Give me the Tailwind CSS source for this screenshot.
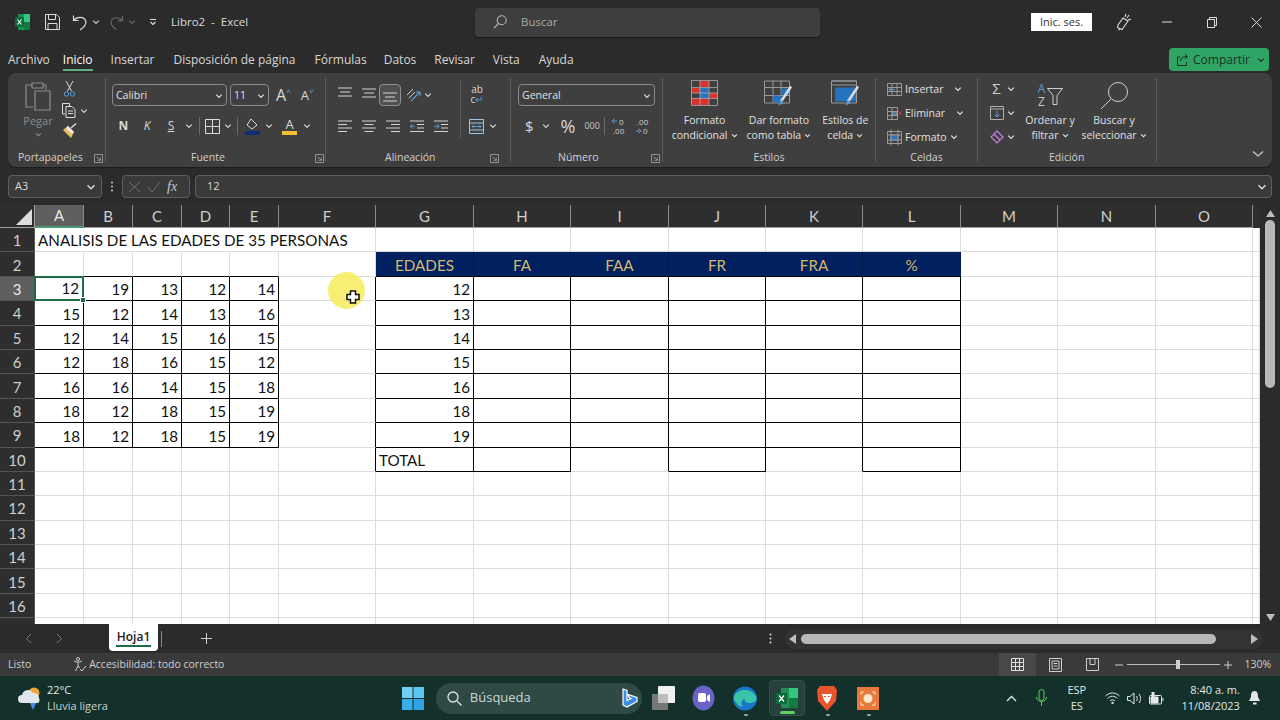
<!DOCTYPE html>
<html lang="es"><head><meta charset="utf-8"><title>Libro2 - Excel</title>
<script src="https://cdn.jsdelivr.net/npm/@tailwindcss/browser@4"></script></head>
<body class="m-0 overflow-hidden">
<svg class="hidden"><defs>
<symbol id="ch" viewBox="0 0 8 8"><path d="M1.2 2.600 4 5.400l2.800-2.800" fill="none" stroke="currentColor" stroke-width="1.200"/></symbol>
<symbol id="ln" viewBox="0 0 10 10"><path d="M.5.500h9v9h-9zM3 3l4 4M7 4v3H4" fill="none" stroke="currentColor" stroke-width=".9"/></symbol>
</defs></svg>
<div class="relative w-[1280px] h-[720px] overflow-hidden bg-[#2b2b2b] text-[#d6d6d6] flex flex-col font-['Open_Sans',sans-serif] text-[12px]">

<!-- Title bar -->
<header class="h-[44px] flex items-center shrink-0">
  <svg class="ml-[15px] w-[15px] h-[16px]" viewBox="0 0 15 16"><rect x="3" width="12" height="16" rx="1" fill="#1f8f55"/><rect x="9" y="0" width="6" height="8" fill="#33c481"/><rect x="9" y="8" width="6" height="8" fill="#107c41"/><rect y="3" width="9" height="10" rx="1" fill="#0e6b39"/><path d="M2.500 5.500 6.500 10.500M6.500 5.500 2.500 10.500" stroke="#fff" stroke-width="1.100"/></svg>
  <svg class="ml-[15px] w-[15px] h-[16px]" viewBox="0 0 15 16" fill="none" stroke="#dcdcdc" stroke-width="1"><path d="M.5.500h11l3 3v12H.500zM3.500.500v5h7v-5M3 15.500v-6h9v6"/></svg>
  <svg class="ml-[12px] w-[16px] h-[17px]" viewBox="0 0 16 17" fill="none" stroke="#dcdcdc" stroke-width="1.200"><path d="M1.500 1.500v5h5M1.700 6.300C5 2.500 12 2.200 13.700 7c1 3.300-1.700 6.300-5.700 9"/></svg>
  <svg class="ml-[4px] w-[8px] h-[8px] text-[#ccc]"><use href="#ch"/></svg>
  <svg class="ml-[9px] w-[15px] h-[17px]" viewBox="0 0 16 17" fill="none" stroke="#6a6a6a" stroke-width="1.200"><path d="M14.500 1.500v5h-5M14.300 6.300C11 2.500 4 2.200 2.300 7c-1 3.300 1.700 6.300 5.700 9"/></svg>
  <svg class="ml-[4px] w-[8px] h-[8px] text-[#6a6a6a]"><use href="#ch"/></svg>
  <svg class="ml-[13px] w-[8px] h-[8px]" viewBox="0 0 8 8" fill="none" stroke="#ddd"><path d="M1 1.500h6M1.500 4l2.500 2.500L6.500 4" stroke-width="1.200"/></svg>
  <span class="ml-[14px] text-[11.500px] text-[#dcdcdc] whitespace-pre">Libro2  -  Excel</span>
  <div class="ml-[227px] w-[345px] h-[29px] rounded bg-[#3e3e3e] flex items-center shadow-[0_1px_1px_#1a1a1a]">
    <svg class="ml-[18px] w-[14px] h-[14px]" viewBox="0 0 14 14" fill="none" stroke="#b5b5b5" stroke-width="1.100"><circle cx="8.700" cy="5.300" r="4.500"/><path d="M5.500 8.500 .7 13.300"/></svg>
    <span class="ml-[14px] text-[#a8a8a8] text-[11.500px]">Buscar</span>
  </div>
  <div class="ml-[211px] w-[61px] h-[18px] bg-white text-[#333] text-[11px] flex items-center justify-center">Inic. ses.</div>
  <svg class="ml-[24px] w-[16px] h-[18px]" viewBox="0 0 16 18" fill="none" stroke="#dcdcdc" stroke-width="1.100"><path d="M7 5 12 8 6 16.500 1.500 14.500 2 12zM4 16l-1.500 1M10 1l-1 3M13 2l-2 3M15 6l-3 1"/></svg>
  <svg class="ml-[30px] w-[10px] h-[10px]" viewBox="0 0 10 10"><path d="M0 5h10" stroke="#dcdcdc"/></svg>
  <svg class="ml-[35px] w-[10px] h-[11px]" viewBox="0 0 10 11" fill="none" stroke="#dcdcdc"><path d="M.5 2.500h7v8h-7zM2.500 2.500v-2h7v8h-2"/></svg>
  <svg class="ml-[34px] w-[11px] h-[11px]" viewBox="0 0 11 11" fill="none" stroke="#dcdcdc"><path d="M.5.500l10 10M10.500.500l-10 10"/></svg>
</header>

<!-- Tabs -->
<nav class="h-[29px] shrink-0 flex items-start text-[12px] text-[#d8d8d8] relative">
  <span class="ml-[8px] mt-[7px] leading-[17px]">Archivo</span>
  <span class="ml-[13px] mt-[7px] leading-[17px] pb-[1px] border-b-2 border-[#5fae84] text-white">Inicio</span>
  <span class="ml-[18px] mt-[7px] leading-[17px]">Insertar</span>
  <span class="ml-[19px] mt-[7px] leading-[17px]">Disposición de página</span>
  <span class="ml-[19px] mt-[7px] leading-[17px]">Fórmulas</span>
  <span class="ml-[17px] mt-[7px] leading-[17px]">Datos</span>
  <span class="ml-[18px] mt-[7px] leading-[17px]">Revisar</span>
  <span class="ml-[18px] mt-[7px] leading-[17px]">Vista</span>
  <span class="ml-[19px] mt-[7px] leading-[17px]">Ayuda</span>
  <div class="absolute left-[1169px] top-[4px] w-[100px] h-[23px] rounded bg-[#2fa465] flex items-center pl-[8px] text-[#1b3326]">
    <svg class="w-[12px] h-[13px]" viewBox="0 0 12 13" fill="none" stroke="#12301f"><path d="M3 4H.5v8.500h9V9M3.500 8C4 4.500 7 3.500 10 3.500M8 1l2.500 2.500L8 6"/></svg>
    <span class="ml-[4px] text-[12px]">Compartir</span>
    <svg class="ml-[7px] w-[8px] h-[8px]"><use href="#ch"/></svg>
  </div>
</nav>

<!-- Ribbon -->
<section class="mx-2 h-[94px] shrink-0 rounded-lg bg-[#3f3f3f] flex text-[11px] relative shadow-[0_1px_1px_#1c1c1c]">
  <!-- Portapapeles -->
  <div class="w-[97px] flex flex-col">
    <div class="h-[74px] flex">
      <div class="w-[47px] flex flex-col items-center pl-[13px] text-[#8a8a8a]">
        <svg class="mt-[8px] w-[27px] h-[30px]" viewBox="0 0 27 30" fill="none" stroke="#8c8c8c" stroke-width="1.200"><path d="M8 26H1V4h6M18 4h3v5M7 2h11v5H7zM10 10h15v19H10z"/></svg>
        <span class="mt-[2px] text-[11px] leading-[15px] text-[#8a8a8a]">Pegar</span>
        <svg class="mt-[3px] w-[7px] h-[7px] text-[#8a8a8a]"><use href="#ch"/></svg>
      </div>
      <div class="ml-[9px] flex flex-col items-start">
        <svg class="mt-[7px] w-[11px] h-[17px]" viewBox="0 0 11 17" fill="none" stroke="#dcdcdc"><path d="M2 1l5.500 10M9 1 3.500 11"/><circle cx="2.500" cy="14" r="2.200" stroke="#5a9bd5"/><circle cx="8.500" cy="14" r="2.200" stroke="#5a9bd5"/></svg>
        <div class="mt-[6px] flex items-center -ml-[2px]">
          <svg class="w-[15px] h-[15px]" viewBox="0 0 15 15" fill="none" stroke="#dcdcdc"><path d="M3 11H.5V.5h7V3M4 3.500h6l3 3v8H4zM6 8h5M6 10.500h5"/></svg>
          <svg class="ml-[3px] w-[8px] h-[8px]"><use href="#ch"/></svg>
        </div>
        <svg class="mt-[5px] -ml-[2px] w-[15px] h-[16px]" viewBox="0 0 15 16"><path d="M9 5 14 .5" stroke="#ddd" stroke-width="1.500"/><path d="M6 3l6 6-3 6-8-8z" fill="#e8bf5c"/><path d="M6 3l6 6-2 2-6-6z" fill="#eee"/></svg>
      </div>
    </div>
    <div class="h-[20px] pt-[2px] flex items-center text-[#d0d0d0]"><span class="ml-[10px] text-[10.500px]">Portapapeles</span><svg class="ml-[11px] w-[9px] h-[9px] text-[#aaa]"><use href="#ln"/></svg></div>
  </div>
  <div class="w-px my-[5px] bg-[#5c5c5c]"></div>
  <!-- Fuente -->
  <div class="w-[219px] flex flex-col">
    <div class="h-[74px] pl-[6px]">
      <div class="mt-[11px] h-[22px] flex items-center">
        <div class="w-[115px] h-[22px] pt-[1px] rounded border border-[#8a8a8a] flex items-center px-[3px] text-[#e0e0e0] text-[10.500px]"><span>Calibri</span><svg class="ml-auto w-[8px] h-[8px]"><use href="#ch"/></svg></div>
        <div class="ml-[3px] w-[39px] h-[22px] pt-[1px] rounded border border-[#8a8a8a] flex items-center px-[3px] text-[#e0e0e0] text-[10.500px]"><span>11</span><svg class="ml-auto w-[8px] h-[8px]"><use href="#ch"/></svg></div>
        <span class="ml-[7px] text-[16px] text-[#d8d8d8] leading-none">A</span><span class="text-[8px] text-[#5a9bd5] -mt-[8px]">˄</span>
        <span class="ml-[10px] text-[13px] text-[#d8d8d8] leading-none">A</span><span class="text-[8px] text-[#5a9bd5] -mt-[8px]">˅</span>
      </div>
      <div class="mt-[9px] h-[22px] flex items-center text-[12px]">
        <span class="w-[23px] text-center font-bold">N</span>
        <span class="w-[24px] text-center italic">K</span>
        <span class="w-[24px] text-center underline">S</span>
        <svg class="ml-[2px] w-[8px] h-[8px]"><use href="#ch"/></svg>
        <div class="ml-[6px] w-px h-[18px] bg-[#6a6a6a]"></div>
        <svg class="ml-[5px] w-[15px] h-[15px]" viewBox="0 0 15 15" fill="none" stroke="#dcdcdc"><path d="M.5.500h14v14H.500zM7.500.500v14M.500 7.500h14"/></svg>
        <svg class="ml-[4px] w-[8px] h-[8px]"><use href="#ch"/></svg>
        <div class="ml-[5px] w-px h-[18px] bg-[#6a6a6a]"></div>
        <svg class="ml-[7px] w-[15px] h-[17px]" viewBox="0 0 15 17"><path d="M6 1 12 7 7 11 2 7z" fill="none" stroke="#dcdcdc"/><path d="M0 13h15v4H0z" fill="#0f2f75"/></svg>
        <svg class="ml-[5px] w-[8px] h-[8px]"><use href="#ch"/></svg>
        <div class="ml-[9px] w-[15px] flex flex-col items-center"><span class="text-[13px] leading-[13px] text-[#ddd]">A</span><div class="w-[15px] h-[4px] bg-[#f0c030]"></div></div>
        <svg class="ml-[6px] w-[8px] h-[8px]"><use href="#ch"/></svg>
      </div>
    </div>
    <div class="h-[20px] pt-[2px] flex items-center text-[#d0d0d0]"><span class="ml-[85px] text-[10.500px]">Fuente</span><svg class="ml-[90px] w-[9px] h-[9px] text-[#aaa]"><use href="#ln"/></svg></div>
  </div>
  <div class="w-px my-[5px] bg-[#5c5c5c]"></div>
  <!-- Alineación -->
  <div class="w-[184px] flex flex-col relative">
    <div class="h-[74px] flex">
      <div class="pl-[12px] w-[134px]">
        <div class="mt-[11px] h-[22px] flex items-center">
          <svg class="w-[14px] h-[11px] -mt-[6px]" viewBox="0 0 14 11" stroke="#d4d4d4"><path d="M0 1h14M2 5h10M0 9h14"/></svg>
          <svg class="ml-[10px] w-[14px] h-[11px] -mt-[4px]" viewBox="0 0 14 11" stroke="#d4d4d4"><path d="M0 1h14M2 5h10M0 9h14"/></svg>
          <div class="ml-[3px] w-[22px] h-[22px] rounded border border-[#909090] bg-[#505050] flex items-end justify-center pb-[3px]"><svg class="w-[14px] h-[11px]" viewBox="0 0 14 11" stroke="#d4d4d4"><path d="M0 2h14M2 6h10M0 10h14"/></svg></div>
          <svg class="ml-[5px] w-[15px] h-[15px]" viewBox="0 0 15 15" fill="none" stroke="#d4d4d4"><path d="M1 7 7 1M3 10l6-6"/><path d="M5 13 14 4M14 8V4h-4" stroke="#5a9bd5" stroke-width="1.200"/></svg>
          <svg class="ml-[3px] w-[8px] h-[8px]"><use href="#ch"/></svg>
        </div>
        <div class="mt-[9px] h-[22px] flex items-center gap-[10px]">
          <svg class="w-[14px] h-[13px]" viewBox="0 0 14 13" stroke="#d4d4d4"><path d="M0 1h14M0 4.500h9M0 8h14M0 11.500h9"/></svg>
          <svg class="w-[14px] h-[13px]" viewBox="0 0 14 13" stroke="#d4d4d4"><path d="M0 1h14M2.500 4.500h9M0 8h14M2.500 11.500h9"/></svg>
          <svg class="w-[14px] h-[13px]" viewBox="0 0 14 13" stroke="#d4d4d4"><path d="M0 1h14M5 4.500h9M0 8h14M5 11.500h9"/></svg>
          <svg class="w-[14px] h-[13px]" viewBox="0 0 14 13" fill="none" stroke="#d4d4d4"><path d="M0 1h14M7 4.500h7M7 8h7M0 11.500h14"/><path d="M5 6.300H0M2.500 4 .5 6.300 2.500 8.500" stroke="#5a9bd5"/></svg>
          <svg class="w-[14px] h-[13px]" viewBox="0 0 14 13" fill="none" stroke="#d4d4d4"><path d="M0 1h14M7 4.500h7M7 8h7M0 11.500h14"/><path d="M0 6.300h5M3 4l2 2.300L3 8.500" stroke="#5a9bd5"/></svg>
        </div>
      </div>
      <div class="w-px mt-[8px] h-[57px] bg-[#5c5c5c]"></div>
      <div class="pl-[8px]">
        <div class="mt-[11px] h-[22px] w-[16px] text-[10px] leading-[10px] text-[#d8d8d8] text-center">ab<br>c<span class="text-[#5a9bd5]">↵</span></div>
        <div class="mt-[9px] h-[22px] flex items-center">
          <svg class="w-[15px] h-[15px]" viewBox="0 0 15 15" fill="none" stroke="#9cc3e6"><path d="M.5.500h14v14H.500zM.500 4h14M.500 11h14"/><path d="M3 7.500h9M5 5.500l-2 2 2 2M10 5.500l2 2-2 2" stroke="#5a9bd5"/></svg>
          <svg class="ml-[5px] w-[8px] h-[8px]"><use href="#ch"/></svg>
        </div>
      </div>
    </div>
    <div class="h-[20px] pt-[2px] flex items-center text-[#d0d0d0]"><span class="ml-[59px] text-[10.500px]">Alineación</span><svg class="ml-[54px] w-[9px] h-[9px] text-[#aaa]"><use href="#ln"/></svg></div>
  </div>
  <div class="w-px my-[5px] bg-[#5c5c5c]"></div>
  <!-- Número -->
  <div class="w-[151px] flex flex-col">
    <div class="h-[74px] pl-[7px]">
      <div class="mt-[11px] w-[137px] h-[22px] pt-[1px] rounded border border-[#8a8a8a] flex items-center px-[3px] text-[#e0e0e0] text-[10.500px]"><span>General</span><svg class="ml-auto w-[8px] h-[8px]"><use href="#ch"/></svg></div>
      <div class="mt-[9px] h-[22px] flex items-center">
        <span class="ml-[7px] text-[15px] leading-none">$</span>
        <svg class="ml-[8px] w-[8px] h-[8px]"><use href="#ch"/></svg>
        <span class="ml-[11px] text-[18px] leading-none">%</span>
        <span class="ml-[9px] text-[9px] text-[#c8c8c8]">000</span>
        <div class="ml-[4px] w-px h-[18px] bg-[#6a6a6a]"></div>
        <svg class="ml-[6px] w-[16px] h-[18px]" viewBox="0 0 16 18" fill="none"><path d="M6 4H1M3.500 1.500 1 4l2.500 2.500" stroke="#5a9bd5"/><text x="8" y="8" font-size="8" fill="#ccc">0</text><text x="2" y="17" font-size="8" fill="#ccc">.00</text></svg>
        <svg class="ml-[8px] w-[16px] h-[18px]" viewBox="0 0 16 18" fill="none"><path d="M1 14h5M3.500 11.500 6 14l-2.500 2.500" stroke="#5a9bd5"/><text x="2" y="8" font-size="8" fill="#ccc">.00</text><text x="8" y="17" font-size="8" fill="#ccc">0</text></svg>
      </div>
    </div>
    <div class="h-[20px] pt-[2px] flex items-center text-[#d0d0d0]"><span class="ml-[47px] text-[10.500px]">Número</span><svg class="ml-[52px] w-[9px] h-[9px] text-[#aaa]"><use href="#ln"/></svg></div>
  </div>
  <div class="w-px my-[5px] bg-[#5c5c5c]"></div>
  <!-- Estilos -->
  <div class="w-[212px] flex flex-col">
    <div class="h-[74px] flex text-[10.500px] leading-[15px] text-center text-[#e0e0e0]">
      <div class="w-[84px] flex flex-col items-center">
        <svg class="mt-[7px] w-[27px] h-[26px]" viewBox="0 0 27 24" preserveAspectRatio="none"><path d="M9 1h9v6H9z" fill="#d8332c"/><path d="M1 7h8v5H1z" fill="#d8332c"/><path d="M9 12h9v5H9zM9 7h9v5H9z" fill="#2473c0"/><path d="M18 12h8v5h-8z" fill="#d8332c"/><path d="M1 17h17v6H1z" fill="#d8332c"/><path d="M.5.500h26v23H.500zM9 .500v23M18 .500v23M.500 7h26M.500 12h26M.500 17h26" fill="none" stroke="#aaa" stroke-width=".8"/></svg>
        <span class="mt-[7px]">Formato</span>
        <span class="whitespace-nowrap flex items-center gap-[3px]">condicional<svg class="w-[7px] h-[7px]"><use href="#ch"/></svg></span>
      </div>
      <div class="w-[74px] flex flex-col items-center -ml-[4px]">
        <svg class="mt-[7px] w-[29px] h-[27px]" viewBox="0 0 29 26" fill="none"><path d="M.5.500h25v22H.500zM.500 7h25M9 .500v22M17 .500v22M.500 15h25" stroke="#9a9a9a"/><path d="M17 8h8v6h-8zM9 15h8v7H9z" fill="#2473c0"/><path d="M27 6 17 21" stroke="#ddd" stroke-width="2.500"/><path d="M18 19l-4 6 5-2z" fill="#5a9bd5"/></svg>
        <span class="mt-[6px] whitespace-nowrap">Dar formato</span>
        <span class="whitespace-nowrap flex items-center gap-[3px]">como tabla<svg class="w-[7px] h-[7px]"><use href="#ch"/></svg></span>
      </div>
      <div class="w-[60px] flex flex-col items-center">
        <svg class="mt-[7px] w-[29px] h-[27px]" viewBox="0 0 29 26" fill="none"><path d="M.5.500h25v22H.500z" stroke="#9a9a9a"/><path d="M.5.500h25v4H.500z" stroke="#9a9a9a"/><path d="M4 7h21v14H4z" fill="#2473c0"/><path d="M27 6 17 21" stroke="#ddd" stroke-width="2.500"/><path d="M18 19l-4 6 5-2z" fill="#5a9bd5"/></svg>
        <span class="mt-[6px] whitespace-nowrap">Estilos de</span>
        <span class="whitespace-nowrap flex items-center gap-[3px]">celda<svg class="w-[7px] h-[7px]"><use href="#ch"/></svg></span>
      </div>
    </div>
    <div class="h-[20px] pt-[2px] flex items-center justify-center text-[#d0d0d0] text-[10.500px]">Estilos</div>
  </div>
  <div class="w-px my-[5px] bg-[#5c5c5c]"></div>
  <!-- Celdas -->
  <div class="w-[101px] flex flex-col">
    <div class="h-[74px] pl-[11px] pt-[8px] flex flex-col gap-[8px] text-[10.500px] leading-[16px] text-[#e0e0e0]">
      <div class="flex items-center h-[16px]"><svg class="w-[15px] h-[15px]" viewBox="0 0 15 15" fill="none" stroke="#9a9a9a"><path d="M.5 1.500h14v12H.500zM.500 5.500h14M.500 9.500h14M5 1.500v12M10 1.500v12"/><path d="M2 7.500h6M4 5.500l-2 2 2 2" stroke="#5a9bd5"/></svg><span class="ml-[3px]">Insertar</span><svg class="ml-[11px] w-[8px] h-[8px]"><use href="#ch"/></svg></div>
      <div class="flex items-center h-[16px]"><svg class="w-[15px] h-[15px]" viewBox="0 0 15 15" fill="none" stroke="#9a9a9a"><path d="M.5 1.500h10v12H.500zM.500 5.500h10M.500 9.500h10M5 1.500v12"/><path d="M5 6h5v3H5z" fill="#2473c0"/><path d="M11 5l4 4M15 5l-4 4" stroke="#d8332c"/></svg><span class="ml-[3px]">Eliminar</span><svg class="ml-[11px] w-[8px] h-[8px]"><use href="#ch"/></svg></div>
      <div class="flex items-center h-[16px]"><svg class="w-[15px] h-[17px]" viewBox="0 0 15 17" fill="none" stroke="#9a9a9a"><path d="M.5 2.500h14v12H.500zM.500 6h14M.500 11h14M4 .500v16M11 .500v16"/><path d="M4 6h7v5H4z" fill="#2473c0"/></svg><span class="ml-[3px]">Formato</span><svg class="ml-[3px] w-[8px] h-[8px]"><use href="#ch"/></svg></div>
    </div>
    <div class="h-[20px] pt-[2px] flex items-center justify-center text-[#d0d0d0] text-[10.500px]">Celdas</div>
  </div>
  <div class="w-px my-[5px] bg-[#5c5c5c]"></div>
  <!-- Edición -->
  <div class="w-[178px] flex flex-col">
    <div class="h-[74px] flex text-[10.500px] leading-[15px] text-center text-[#e0e0e0]">
      <div class="pl-[12px] pt-[8px] w-[44px] flex flex-col gap-[9px]">
        <div class="flex items-center h-[15px]"><span class="text-[15px] leading-none text-[#d0d0d0] w-[13px]">Σ</span><svg class="ml-[4px] w-[8px] h-[8px]"><use href="#ch"/></svg></div>
        <div class="flex items-center h-[15px]"><svg class="w-[14px] h-[14px]" viewBox="0 0 14 14" fill="none" stroke="#b0b0b0"><path d="M.5.500h13v13H.500zM.500 3h13"/><path d="M7 5v6M4.500 8.500 7 11l2.500-2.500" stroke="#5a9bd5"/></svg><svg class="ml-[3px] w-[8px] h-[8px]"><use href="#ch"/></svg></div>
        <div class="flex items-center h-[15px]"><svg class="w-[14px] h-[14px]" viewBox="0 0 14 14" fill="none" stroke="#c77ee0" stroke-width="1.200"><path d="M7 1l6 6-6 6-6-6z"/><path d="M4 4l6 6"/></svg><svg class="ml-[3px] w-[8px] h-[8px]"><use href="#ch"/></svg></div>
      </div>
      <div class="w-[58px] flex flex-col items-center -ml-[1px]">
        <div class="mt-[9px] h-[28px] w-[28px] flex">
          <div class="w-[11px] flex flex-col text-[12px] leading-[13px]"><span class="text-[#5a9bd5]">A</span><span class="text-[#c8c8c8]">Z</span></div>
          <svg class="mt-[6px] w-[16px] h-[17px]" viewBox="0 0 16 17" fill="none"><path d="M.5.500h15l-5.500 7v9h-4v-9z" stroke="#d0d0d0"/></svg>
        </div>
        <span class="mt-[3px] whitespace-nowrap">Ordenar y</span>
        <span class="whitespace-nowrap flex items-center gap-[3px]">filtrar<svg class="w-[7px] h-[7px]"><use href="#ch"/></svg></span>
      </div>
      <div class="w-[70px] flex flex-col items-center">
        <svg class="mt-[9px] w-[28px] h-[28px]" viewBox="0 0 28 28" fill="none" stroke="#d0d0d0"><circle cx="18" cy="10" r="9.500"/><path d="M11 17 1 27"/></svg>
        <span class="mt-[3px] whitespace-nowrap">Buscar y</span>
        <span class="whitespace-nowrap flex items-center gap-[3px]">seleccionar<svg class="w-[7px] h-[7px]"><use href="#ch"/></svg></span>
      </div>
    </div>
    <div class="h-[20px] pt-[2px] flex items-center text-[#d0d0d0] text-[10.500px]"><span class="ml-[71px]">Edición</span></div>
  </div>
  <div class="w-px my-[5px] bg-[#5c5c5c]"></div>
  <svg class="absolute left-[1244px] top-[76px] w-[12px] h-[10px]" viewBox="0 0 12 10" fill="none" stroke="#ccc" stroke-width="1.300"><path d="M1 2.500 6 7l5-4.500"/></svg>
</section>

<!-- Formula bar -->
<div class="h-[38px] shrink-0 flex items-start pt-[8px]">
  <div class="ml-[8px] w-[94px] h-[23px] rounded border border-[#5e5e5e] bg-[#3a3a3a] flex items-center pl-[6px] pr-[5px] text-[11px] text-[#d8d8d8]">A3<svg class="ml-auto w-[10px] h-[10px]"><use href="#ch"/></svg></div>
  <svg class="ml-[8px] mt-[6px] w-[4px] h-[11px]" viewBox="0 0 4 11" fill="#ccc"><circle cx="2" cy="1.500" r="1"/><circle cx="2" cy="5.500" r="1"/><circle cx="2" cy="9.500" r="1"/></svg>
  <div class="ml-[8px] w-[68px] h-[23px] rounded border border-[#5e5e5e] bg-[#3a3a3a] flex items-center pl-[5px] gap-[6px]">
    <svg class="w-[13px] h-[12px]" viewBox="0 0 13 12" stroke="#707070"><path d="M1 1l11 10M12 1 1 11"/></svg>
    <svg class="w-[14px] h-[12px]" viewBox="0 0 14 12" fill="none" stroke="#707070"><path d="M1 6l4 5 8-10"/></svg>
    <span class="text-[#c8c8c8] italic text-[14px] font-['Liberation_Serif',serif] leading-none">fx</span>
  </div>
  <div class="ml-[5px] w-[1077px] h-[23px] rounded border border-[#5e5e5e] bg-[#3a3a3a] flex items-center pl-[11px] pr-[4px] text-[11px] text-[#d8d8d8]">12<svg class="ml-auto w-[10px] h-[10px]"><use href="#ch"/></svg></div>
</div>

<!-- Sheet -->
<main class="h-[420px] shrink-0 flex overflow-hidden relative">
  <div class="w-[1260px] h-[419px] bg-white overflow-hidden font-['Lato',sans-serif] text-[15.200px] text-[#111] grid grid-cols-[35px_49px_49px_49px_48px_49px_97px_98px_97px_98px_97px_97px_98px_97px_98px_97px_7px] grid-rows-[23px_repeat(17,24.4px)] [&>div]:border-r [&>div]:border-b [&>div]:border-[#dcdcdc] [&>div]:flex [&>div]:items-end [&>div]:justify-end [&>div]:pr-[3px] [&>div]:leading-[21px]">
    <!-- header -->
    <div class="bg-[#2e2e2e] border-b-[#a0a0a0]! border-r-[#a0a0a0]! relative"><svg class="absolute right-[2px] bottom-[2px] w-[16px] h-[16px]" viewBox="0 0 16 16"><path d="M16 0v16H0z" fill="#dcdcdc"/></svg></div>
    <div class="bg-[#5f5f5f] text-[#e8e8e8] border-b-2! border-b-[#4f9b76]! border-r-[#8a8a8a]! justify-center! pr-0! items-center! text-[15px]">A</div>
    <div class="bg-[#2e2e2e] text-[#cfcfcf] border-b-[#a0a0a0]! border-r-[#8a8a8a]! justify-center! pr-0! items-center! text-[15px]">B</div>
    <div class="bg-[#2e2e2e] text-[#cfcfcf] border-b-[#a0a0a0]! border-r-[#8a8a8a]! justify-center! pr-0! items-center! text-[15px]">C</div>
    <div class="bg-[#2e2e2e] text-[#cfcfcf] border-b-[#a0a0a0]! border-r-[#8a8a8a]! justify-center! pr-0! items-center! text-[15px]">D</div>
    <div class="bg-[#2e2e2e] text-[#cfcfcf] border-b-[#a0a0a0]! border-r-[#8a8a8a]! justify-center! pr-0! items-center! text-[15px]">E</div>
    <div class="bg-[#2e2e2e] text-[#cfcfcf] border-b-[#a0a0a0]! border-r-[#8a8a8a]! justify-center! pr-0! items-center! text-[15px]">F</div>
    <div class="bg-[#2e2e2e] text-[#cfcfcf] border-b-[#a0a0a0]! border-r-[#8a8a8a]! justify-center! pr-0! items-center! text-[15px]">G</div>
    <div class="bg-[#2e2e2e] text-[#cfcfcf] border-b-[#a0a0a0]! border-r-[#8a8a8a]! justify-center! pr-0! items-center! text-[15px]">H</div>
    <div class="bg-[#2e2e2e] text-[#cfcfcf] border-b-[#a0a0a0]! border-r-[#8a8a8a]! justify-center! pr-0! items-center! text-[15px]">I</div>
    <div class="bg-[#2e2e2e] text-[#cfcfcf] border-b-[#a0a0a0]! border-r-[#8a8a8a]! justify-center! pr-0! items-center! text-[15px]">J</div>
    <div class="bg-[#2e2e2e] text-[#cfcfcf] border-b-[#a0a0a0]! border-r-[#8a8a8a]! justify-center! pr-0! items-center! text-[15px]">K</div>
    <div class="bg-[#2e2e2e] text-[#cfcfcf] border-b-[#a0a0a0]! border-r-[#8a8a8a]! justify-center! pr-0! items-center! text-[15px]">L</div>
    <div class="bg-[#2e2e2e] text-[#cfcfcf] border-b-[#a0a0a0]! border-r-[#8a8a8a]! justify-center! pr-0! items-center! text-[15px]">M</div>
    <div class="bg-[#2e2e2e] text-[#cfcfcf] border-b-[#a0a0a0]! border-r-[#8a8a8a]! justify-center! pr-0! items-center! text-[15px]">N</div>
    <div class="bg-[#2e2e2e] text-[#cfcfcf] border-b-[#a0a0a0]! border-r-[#8a8a8a]! justify-center! pr-0! items-center! text-[15px]">O</div>
    <div class="bg-[#2e2e2e] border-transparent!"></div>
    <!-- 1 -->
    <div class="bg-[#2e2e2e] text-[#cfcfcf] border-[#555]! justify-center! pr-0! items-center! pt-[2px] text-[15px]">1</div>
    <div class="col-span-6 justify-start! pl-[3px] whitespace-nowrap">ANALISIS DE LAS EDADES DE 35 PERSONAS</div>
    <div></div><div></div><div></div><div></div><div></div><div></div><div></div><div></div><div></div><div></div>
    <!-- 2 -->
    <div class="bg-[#2e2e2e] text-[#cfcfcf] border-[#555]! justify-center! pr-0! items-center! pt-[2px] text-[15px]">2</div>
    <div class="border-b-black!"></div><div class="border-b-black!"></div><div class="border-b-black!"></div><div class="border-b-black!"></div><div class="border-b-black!"></div>
    <div></div>
    <div class="bg-[#002060] text-[#d2b96e] justify-center! pr-0! border-r-[#001a4d]! border-b-black!">EDADES</div>
    <div class="bg-[#002060] text-[#d2b96e] justify-center! pr-0! border-r-[#001a4d]! border-b-black!">FA</div>
    <div class="bg-[#002060] text-[#d2b96e] justify-center! pr-0! border-r-[#001a4d]! border-b-black!">FAA</div>
    <div class="bg-[#002060] text-[#d2b96e] justify-center! pr-0! border-r-[#001a4d]! border-b-black!">FR</div>
    <div class="bg-[#002060] text-[#d2b96e] justify-center! pr-0! border-r-[#001a4d]! border-b-black!">FRA</div>
    <div class="bg-[#002060] text-[#d2b96e] justify-center! pr-0! border-r-[#001a4d]! border-b-black!">%</div>
    <div></div><div></div><div></div><div></div>
    <!-- 3 -->
    <div class="bg-[#5f5f5f] text-[#e8e8e8] border-[#555]! border-r-[#4f9b76]! justify-center! pr-0! items-center! pt-[2px] text-[15px]">3</div>
    <div class="border-2! border-[#1e6b48]! -mt-px -ml-px relative">12<span class="absolute -right-[4px] -bottom-[4px] w-[6px] h-[6px] bg-[#1e6b48] border border-white"></span></div>
    <div class="border-r-black! border-b-black!">19</div><div class="border-r-black! border-b-black!">13</div><div class="border-r-black! border-b-black!">12</div><div class="border-r-black! border-b-black!">14</div>
    <div class="border-r-black!"></div>
    <div class="border-r-black! border-b-black!">12</div><div class="border-r-black! border-b-black!"></div><div class="border-r-black! border-b-black!"></div><div class="border-r-black! border-b-black!"></div><div class="border-r-black! border-b-black!"></div><div class="border-r-black! border-b-black!"></div>
    <div></div><div></div><div></div><div></div>
    <!-- 4 -->
    <div class="bg-[#2e2e2e] text-[#cfcfcf] border-[#555]! justify-center! pr-0! items-center! pt-[2px] text-[15px]">4</div>
    <div class="border-r-black! border-b-black!">15</div><div class="border-r-black! border-b-black!">12</div><div class="border-r-black! border-b-black!">14</div><div class="border-r-black! border-b-black!">13</div><div class="border-r-black! border-b-black!">16</div>
    <div class="border-r-black!"></div>
    <div class="border-r-black! border-b-black!">13</div><div class="border-r-black! border-b-black!"></div><div class="border-r-black! border-b-black!"></div><div class="border-r-black! border-b-black!"></div><div class="border-r-black! border-b-black!"></div><div class="border-r-black! border-b-black!"></div>
    <div></div><div></div><div></div><div></div>
    <!-- 5 -->
    <div class="bg-[#2e2e2e] text-[#cfcfcf] border-[#555]! justify-center! pr-0! items-center! pt-[2px] text-[15px]">5</div>
    <div class="border-r-black! border-b-black!">12</div><div class="border-r-black! border-b-black!">14</div><div class="border-r-black! border-b-black!">15</div><div class="border-r-black! border-b-black!">16</div><div class="border-r-black! border-b-black!">15</div>
    <div class="border-r-black!"></div>
    <div class="border-r-black! border-b-black!">14</div><div class="border-r-black! border-b-black!"></div><div class="border-r-black! border-b-black!"></div><div class="border-r-black! border-b-black!"></div><div class="border-r-black! border-b-black!"></div><div class="border-r-black! border-b-black!"></div>
    <div></div><div></div><div></div><div></div>
    <!-- 6 -->
    <div class="bg-[#2e2e2e] text-[#cfcfcf] border-[#555]! justify-center! pr-0! items-center! pt-[2px] text-[15px]">6</div>
    <div class="border-r-black! border-b-black!">12</div><div class="border-r-black! border-b-black!">18</div><div class="border-r-black! border-b-black!">16</div><div class="border-r-black! border-b-black!">15</div><div class="border-r-black! border-b-black!">12</div>
    <div class="border-r-black!"></div>
    <div class="border-r-black! border-b-black!">15</div><div class="border-r-black! border-b-black!"></div><div class="border-r-black! border-b-black!"></div><div class="border-r-black! border-b-black!"></div><div class="border-r-black! border-b-black!"></div><div class="border-r-black! border-b-black!"></div>
    <div></div><div></div><div></div><div></div>
    <!-- 7 -->
    <div class="bg-[#2e2e2e] text-[#cfcfcf] border-[#555]! justify-center! pr-0! items-center! pt-[2px] text-[15px]">7</div>
    <div class="border-r-black! border-b-black!">16</div><div class="border-r-black! border-b-black!">16</div><div class="border-r-black! border-b-black!">14</div><div class="border-r-black! border-b-black!">15</div><div class="border-r-black! border-b-black!">18</div>
    <div class="border-r-black!"></div>
    <div class="border-r-black! border-b-black!">16</div><div class="border-r-black! border-b-black!"></div><div class="border-r-black! border-b-black!"></div><div class="border-r-black! border-b-black!"></div><div class="border-r-black! border-b-black!"></div><div class="border-r-black! border-b-black!"></div>
    <div></div><div></div><div></div><div></div>
    <!-- 8 -->
    <div class="bg-[#2e2e2e] text-[#cfcfcf] border-[#555]! justify-center! pr-0! items-center! pt-[2px] text-[15px]">8</div>
    <div class="border-r-black! border-b-black!">18</div><div class="border-r-black! border-b-black!">12</div><div class="border-r-black! border-b-black!">18</div><div class="border-r-black! border-b-black!">15</div><div class="border-r-black! border-b-black!">19</div>
    <div class="border-r-black!"></div>
    <div class="border-r-black! border-b-black!">18</div><div class="border-r-black! border-b-black!"></div><div class="border-r-black! border-b-black!"></div><div class="border-r-black! border-b-black!"></div><div class="border-r-black! border-b-black!"></div><div class="border-r-black! border-b-black!"></div>
    <div></div><div></div><div></div><div></div>
    <!-- 9 -->
    <div class="bg-[#2e2e2e] text-[#cfcfcf] border-[#555]! justify-center! pr-0! items-center! pt-[2px] text-[15px]">9</div>
    <div class="border-r-black! border-b-black!">18</div><div class="border-r-black! border-b-black!">12</div><div class="border-r-black! border-b-black!">18</div><div class="border-r-black! border-b-black!">15</div><div class="border-r-black! border-b-black!">19</div>
    <div class="border-r-black!"></div>
    <div class="border-r-black! border-b-black!">19</div><div class="border-r-black! border-b-black!"></div><div class="border-r-black! border-b-black!"></div><div class="border-r-black! border-b-black!"></div><div class="border-r-black! border-b-black!"></div><div class="border-r-black! border-b-black!"></div>
    <div></div><div></div><div></div><div></div>
    <!-- 10 -->
    <div class="bg-[#2e2e2e] text-[#cfcfcf] border-[#555]! justify-center! pr-0! items-center! pt-[2px] text-[15px]">10</div>
    <div></div><div></div><div></div><div></div><div></div>
    <div class="border-r-black!"></div>
    <div class="border-r-black! border-b-black! justify-start! pl-[3px]">TOTAL</div><div class="border-r-black! border-b-black!"></div><div class="border-r-black!"></div><div class="border-r-black! border-b-black!"></div><div class="border-r-black!"></div><div class="border-r-black! border-b-black!"></div>
    <div></div><div></div><div></div><div></div>
    <!-- 11 -->
    <div class="bg-[#2e2e2e] text-[#cfcfcf] border-[#555]! justify-center! pr-0! items-center! pt-[2px] text-[15px]">11</div>
    <div></div><div></div><div></div><div></div><div></div><div></div><div></div><div></div><div></div><div></div><div></div><div></div><div></div><div></div><div></div><div></div>
    <!-- 12 -->
    <div class="bg-[#2e2e2e] text-[#cfcfcf] border-[#555]! justify-center! pr-0! items-center! pt-[2px] text-[15px]">12</div>
    <div></div><div></div><div></div><div></div><div></div><div></div><div></div><div></div><div></div><div></div><div></div><div></div><div></div><div></div><div></div><div></div>
    <!-- 13 -->
    <div class="bg-[#2e2e2e] text-[#cfcfcf] border-[#555]! justify-center! pr-0! items-center! pt-[2px] text-[15px]">13</div>
    <div></div><div></div><div></div><div></div><div></div><div></div><div></div><div></div><div></div><div></div><div></div><div></div><div></div><div></div><div></div><div></div>
    <!-- 14 -->
    <div class="bg-[#2e2e2e] text-[#cfcfcf] border-[#555]! justify-center! pr-0! items-center! pt-[2px] text-[15px]">14</div>
    <div></div><div></div><div></div><div></div><div></div><div></div><div></div><div></div><div></div><div></div><div></div><div></div><div></div><div></div><div></div><div></div>
    <!-- 15 -->
    <div class="bg-[#2e2e2e] text-[#cfcfcf] border-[#555]! justify-center! pr-0! items-center! pt-[2px] text-[15px]">15</div>
    <div></div><div></div><div></div><div></div><div></div><div></div><div></div><div></div><div></div><div></div><div></div><div></div><div></div><div></div><div></div><div></div>
    <!-- 16 -->
    <div class="bg-[#2e2e2e] text-[#cfcfcf] border-[#555]! justify-center! pr-0! items-center! pt-[2px] text-[15px]">16</div>
    <div></div><div></div><div></div><div></div><div></div><div></div><div></div><div></div><div></div><div></div><div></div><div></div><div></div><div></div><div></div><div></div>
    <!-- 17 -->
    <div class="bg-[#2e2e2e] border-[#555]!"></div>
    <div></div><div></div><div></div><div></div><div></div><div></div><div></div><div></div><div></div><div></div><div></div><div></div><div></div><div></div><div></div><div></div>
  </div>
  <!-- vertical scrollbar -->
  <div class="w-[20px] h-[419px] bg-[#2b2b2b] flex flex-col items-center">
    <svg class="mt-[5px] w-[9px] h-[7px]" viewBox="0 0 9 7"><path d="M4.500 0 9 7H0z" fill="#bdbdbd"/></svg>
    <div class="mt-[3px] w-[10px] h-[168px] rounded-full bg-[#b8b8b8]"></div>
    <svg class="mt-auto mb-[3px] w-[9px] h-[7px]" viewBox="0 0 9 7"><path d="M4.500 7 9 0H0z" fill="#bdbdbd"/></svg>
  </div>
  <!-- cursor highlight -->
  <div class="absolute left-[328px] top-[67px] w-[37px] h-[37px] rounded-full bg-[#f5ec5a]/85"></div>
  <svg class="absolute left-[346px] top-[85px] w-[14px] h-[14px]" viewBox="0 0 14 14"><path d="M4.500 1h5v3.500H13v5H9.500V13h-5V9.500H1v-5h3.500z" fill="#fff" stroke="#111" stroke-width="1.500"/></svg>
</main>

<!-- Sheet tabs -->
<div class="h-[29px] shrink-0 flex items-center relative -mt-px">
  <svg class="ml-[25px] w-[7px] h-[11px]" viewBox="0 0 7 11" fill="none" stroke="#7a7a7a"><path d="M6 1 1.500 5.500 6 10"/></svg>
  <svg class="ml-[24px] w-[7px] h-[11px]" viewBox="0 0 7 11" fill="none" stroke="#7a7a7a"><path d="M1 1l4.500 4.500L1 10"/></svg>
  <div class="ml-[46px] w-[49px] h-[27px] -mt-[2px] rounded-b bg-white text-[#222] text-[12px] font-semibold flex flex-col items-center justify-center"><span class="leading-[16px] border-b-2 border-[#1e6b48] px-[1px]">Hoja1</span></div>
  <div class="ml-[3px] w-px h-[16px] bg-[#8a8a8a]"></div>
  <svg class="ml-[39px] w-[11px] h-[11px]" viewBox="0 0 11 11" stroke="#cfcfcf"><path d="M5.500 0v11M0 5.500h11"/></svg>
  <svg class="ml-[557px] w-[3px] h-[11px]" viewBox="0 0 3 11" fill="#ddd"><circle cx="1.500" cy="1.500" r="1"/><circle cx="1.500" cy="5.500" r="1"/><circle cx="1.500" cy="9.500" r="1"/></svg>
  <div class="ml-[13px] w-[478px] h-[20px] rounded-full bg-[#333] flex items-center px-[4px]">
    <svg class="w-[7px] h-[10px]" viewBox="0 0 7 10"><path d="M7 0v10L0 5z" fill="#bdbdbd"/></svg>
    <div class="ml-[5px] w-[415px] h-[10px] rounded-full bg-[#b8b8b8]"></div>
    <svg class="ml-auto mr-[1px] w-[7px] h-[10px]" viewBox="0 0 7 10"><path d="M0 0v10l7-5z" fill="#bdbdbd"/></svg>
  </div>
</div>

<!-- Status bar -->
<footer class="h-[23px] shrink-0 bg-[#3a3a3a] flex items-center text-[10.500px] text-[#cfcfcf]">
  <span class="ml-[8px]">Listo</span>
  <svg class="ml-[42px] w-[14px] h-[15px]" viewBox="0 0 14 15" fill="none" stroke="#cfcfcf"><circle cx="5" cy="2" r="1.500"/><path d="M1 4c2 1.500 6 1.500 8 0M5 6v3l-2.500 5M5 9l2 2M7 12l2 2 4-5"/></svg>
  <span class="ml-[2px] font-medium">Accesibilidad: todo correcto</span>
  <div class="ml-[775px] w-[37px] h-[23px] bg-[#484848] flex items-center justify-center"><svg class="w-[13px] h-[13px]" viewBox="0 0 13 13" fill="none" stroke="#e0e0e0"><path d="M.5.500h12v12H.500zM4.500.500v12M8.500.500v12M.500 4.500h12M.500 8.500h12"/></svg></div>
  <svg class="ml-[13px] w-[13px] h-[14px]" viewBox="0 0 13 14" fill="none" stroke="#cfcfcf"><path d="M.5.500h12v13H.500zM3 3h7v8H3zM4.500 5.500h4M4.500 8h4"/></svg>
  <svg class="ml-[24px] w-[13px] h-[13px]" viewBox="0 0 13 13" fill="none" stroke="#cfcfcf"><path d="M.5.500h12v12H.500zM4 .500v6h5v-6"/></svg>
  <svg class="ml-[16px] w-[8px] h-[8px]" viewBox="0 0 8 8"><path d="M0 4h8" stroke="#cfcfcf"/></svg>
  <div class="ml-[4px] w-[93px] h-px bg-[#bdbdbd] relative"><div class="absolute left-[49px] -top-[4px] w-[4px] h-[9px] bg-[#cfcfcf]"></div></div>
  <svg class="ml-[4px] w-[8px] h-[8px]" viewBox="0 0 8 8" stroke="#cfcfcf"><path d="M0 4h8M4 0v8"/></svg>
  <span class="ml-[12px]">130%</span>
</footer>

<!-- Taskbar -->
<div class="relative flex-1 bg-[#13302b] flex items-center text-[#e2e8e6] text-[11px]">
  <svg class="ml-[17px] w-[26px] h-[26px]" viewBox="0 0 26 26"><circle cx="17" cy="8" r="5.500" fill="#efa63a"/><path d="M5 18a4 4 0 0 1 0-8 6 6 0 0 1 11-2 5 5 0 0 1 6 5 4 4 0 0 1-1 5z" fill="#dfe6ee"/><path d="M13 18h6l-3 7z" fill="#3f8fe8"/></svg>
  <div class="ml-[4px] flex flex-col leading-[16px]"><span>22°C</span><span class="text-[#c9d2cf]">Lluvia ligera</span></div>
  <svg class="ml-[294px] w-[22px] h-[23px]" viewBox="0 0 22 23"><path d="M0 0h10.500v11H0z" fill="#6fd0f5"/><path d="M11.500 0H22v11H11.500z" fill="#5cc5f2"/><path d="M0 12h10.500v11H0z" fill="#39aee8"/><path d="M11.500 12H22v11H11.500z" fill="#2fa2e2"/></svg>
  <div class="ml-[12px] w-[206px] h-[31px] rounded-full bg-[#2f4a45] flex items-center">
    <svg class="ml-[11px] w-[15px] h-[15px]" viewBox="0 0 15 15" fill="none" stroke="#dfe6e4" stroke-width="1.300"><circle cx="6" cy="6" r="5"/><path d="M10 10l4.500 4.500"/></svg>
    <span class="ml-[8px] text-[13px] text-[#cdd6d3]">Búsqueda</span>
    <svg class="ml-auto mr-[4px] w-[18px] h-[20px]" viewBox="0 0 18 20"><path d="M3 1l4 1.500v10l4-2-2-1-1-3 9 3v4L7 19l-4-2z" fill="#3a8ee8" stroke="#fff" stroke-width="1.200"/></svg>
  </div>
  <svg class="ml-[10px] w-[23px] h-[24px]" viewBox="0 0 23 24"><rect y="8" width="16" height="16" fill="#777"/><rect x="6" y="0" width="17" height="17" rx="1" fill="#f0f0f0"/><rect x="6" y="8" width="10" height="9" fill="#bdbdbd"/></svg>
  <svg class="ml-[17px] w-[23px] h-[27px]" viewBox="0 0 23 27"><ellipse cx="11.500" cy="13" rx="11" ry="12.500" fill="#6b62c9"/><rect x="6" y="8" width="8" height="9" rx="2" fill="#fff"/><path d="M15 11l3-2v8l-3-2z" fill="#fff"/></svg>
  <svg class="ml-[18px] w-[24px] h-[25px]" viewBox="0 0 24 25"><circle cx="12" cy="12.500" r="12" fill="#1a76c8"/><path d="M1 11C3 2 20 1 23.500 12c.5 4-4 5-7 5-4 0-5-2-4.500-4-3 0-5 4-2 8-5-1-9-5-9-10z" fill="#39c6a8"/></svg>
  <div class="ml-[12px] w-[36px] h-[36px] rounded bg-[#26403b] border border-[#334f4a] relative flex items-start justify-center pt-[7px]">
    <svg class="w-[22px] h-[20px]" viewBox="0 0 22 20"><rect x="5" width="17" height="20" rx="1" fill="#1f8f55"/><rect x="13" width="9" height="10" fill="#33c481"/><rect x="13" y="10" width="9" height="10" fill="#107c41"/><rect y="5" width="11" height="11" rx="1" fill="#0e6b39"/><path d="M3 7.500l5 6M8 7.500l-5 6" stroke="#fff" stroke-width="1.200"/></svg>
    <div class="absolute bottom-[1px] left-[10px] w-[15px] h-[3px] rounded bg-[#5fd35f]"></div>
  </div>
  <svg class="ml-[12px] w-[20px] h-[25px]" viewBox="0 0 20 25"><path d="M3 0h14l3 4-1 11-9 10-9-10L0 4z" fill="#e8552c"/><path d="M5 8h10l-2 6-3 4-3-4z" fill="#fff"/><path d="M7 10.500h2M11 10.500h2" stroke="#e8552c"/></svg>
  <svg class="ml-[20px] w-[22px] h-[23px]" viewBox="0 0 22 23"><rect width="22" height="23" fill="#e9793a"/><circle cx="11" cy="11.500" r="4.500" fill="#fbe7c8"/><path d="M4 8V5h3M15 5h3v3M18 15v3h-3M7 18H4v-3" fill="none" stroke="#fbe7c8"/></svg>
  <svg class="ml-[127px] w-[11px] h-[7px]" viewBox="0 0 11 7" fill="none" stroke="#e2e8e6" stroke-width="1.300"><path d="M1 6l4.500-4.500L10 6"/></svg>
  <svg class="ml-[19px] w-[11px] h-[18px]" viewBox="0 0 11 18" fill="none" stroke="#60c860"><rect x="3" y=".5" width="5" height="11" rx="2.500"/><path d="M.5 8c0 6 10 6 10 0M5.500 13v4"/></svg>
  <div class="ml-[15px] w-[30px] flex flex-col items-center leading-[16px]"><span>ESP</span><span>ES</span></div>
  <svg class="ml-[13px] w-[15px] h-[12px]" viewBox="0 0 15 12" fill="none" stroke="#e2e8e6"><path d="M.5 4c4-4 10-4 14 0M2.500 6.500c3-3 7-3 10 0M5 9c1.500-1.500 3.500-1.500 5 0"/><circle cx="7.500" cy="11" r=".8" fill="#e2e8e6"/></svg>
  <svg class="ml-[7px] w-[15px] h-[13px]" viewBox="0 0 15 13" fill="none" stroke="#e2e8e6"><path d="M.5 4.500h2.500L7 1v11L3 8.500H.500zM9.500 4c1 1.500 1 3.500 0 5M12 2c2 2.500 2 6.500 0 9"/></svg>
  <svg class="ml-[7px] w-[15px] h-[13px]" viewBox="0 0 15 13" fill="none" stroke="#e2e8e6"><rect x=".5" y="3.500" width="12" height="8.500" rx="1"/><path d="M14 6v3"/><path d="M3 0h2v5H3z" fill="#e2e8e6"/><path d="M2 5h7v6H2z" fill="#e2e8e6"/></svg>
  <div class="ml-[6px] w-[70px] flex flex-col items-end leading-[16px] whitespace-nowrap"><span>8:40 a. m.</span><span>11/08/2023</span></div>
  <svg class="ml-[8px] w-[13px] h-[16px]" viewBox="0 0 13 16"><path d="M6.500 1C3.500 1 3 4 3 7L1 11h11l-2-4c0-3-.5-6-3.500-6z" fill="#e2e8e6"/><rect x="5" y="12.500" width="3.500" height="2" fill="#e2e8e6"/></svg>
  <div class="absolute left-[744px] bottom-[4px] w-[4px] h-[2px] rounded bg-[#9aa5a2]"></div>
  <div class="absolute left-[826px] bottom-[4px] w-[4px] h-[2px] rounded bg-[#9aa5a2]"></div>
  <div class="absolute left-[867px] bottom-[4px] w-[4px] h-[2px] rounded bg-[#9aa5a2]"></div>
</div>
</div>
</body></html>
